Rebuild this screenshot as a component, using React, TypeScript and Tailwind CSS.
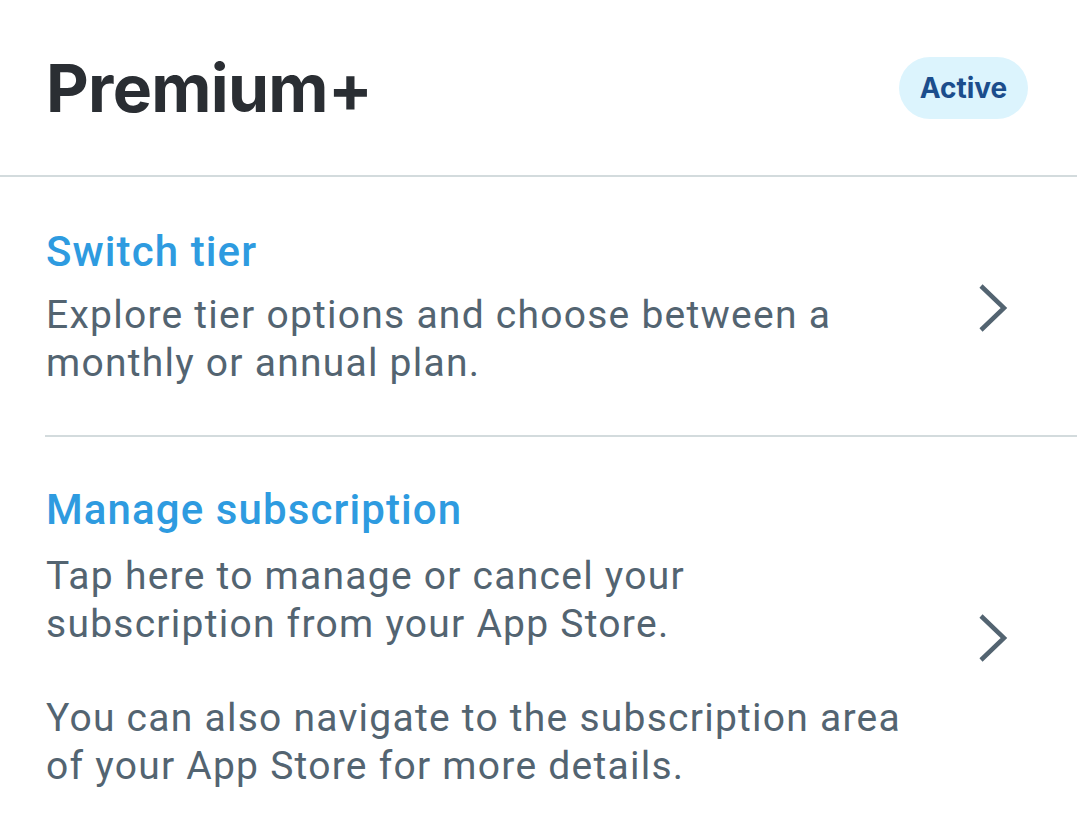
import React from 'react';

const Chevron = () => (
  <svg width="32" height="52" viewBox="0 0 32 52" fill="none" className="shrink-0">
    <path d="M4 4 L27 26 L4 48" stroke="#536471" strokeWidth="4.5" strokeLinecap="butt" strokeLinejoin="miter" />
  </svg>
);

export default function App() {
  return (
    <div className="min-h-screen bg-white" style={{ fontFamily: 'Roboto, "Liberation Sans", sans-serif' }}>
      <div className="flex h-[175px] items-center justify-between pl-[46px] pr-[49px]">
        <h1 className="font-['Inter',sans-serif] text-[66px] leading-none font-bold tracking-[-0.7px] text-[#2a2e33]">
          Premium+
        </h1>
        <span className="flex h-[62px] w-[129px] items-center justify-center rounded-full bg-[#dcf4fd] font-['Inter',sans-serif] text-[28px] font-bold text-[#1b4d8c]">
          Active
        </span>
      </div>
      <div className="h-[2px] bg-[#d3dbdd]" />

      <div className="flex items-center pt-[51px] pb-[48px] pl-[46px] pr-[68px]">
        <div className="w-[870px]">
          <div className="text-[42px] leading-[48px] font-medium tracking-[1.1px] text-[#2e9be0]">Switch tier</div>
          <p className="mt-[15px] text-[39px] leading-[48px] tracking-[1.25px] text-[#536471]">
            Explore tier options and choose between a monthly or annual plan.
          </p>
        </div>
        <div className="ml-auto">
          <Chevron />
        </div>
      </div>

      <div className="ml-[45px] h-[2px] bg-[#d3dbdd]" />

      <div className="flex items-center pt-[49px] pb-[39px] pl-[46px] pr-[68px]">
        <div className="w-[870px]">
          <div className="text-[42px] leading-[48px] font-medium tracking-[1.1px] text-[#2e9be0]">Manage subscription</div>
          <p className="mt-[18px] text-[39px] leading-[48px] tracking-[1.25px] text-[#536471]">
            Tap here to manage or cancel your subscription from your App Store.
          </p>
          <p className="mt-[46px] text-[39px] leading-[48px] tracking-[1.25px] text-[#536471]">
            You can also navigate to the subscription area of your App Store for more details.
          </p>
        </div>
        <div className="ml-auto">
          <Chevron />
        </div>
      </div>
    </div>
  );
}
